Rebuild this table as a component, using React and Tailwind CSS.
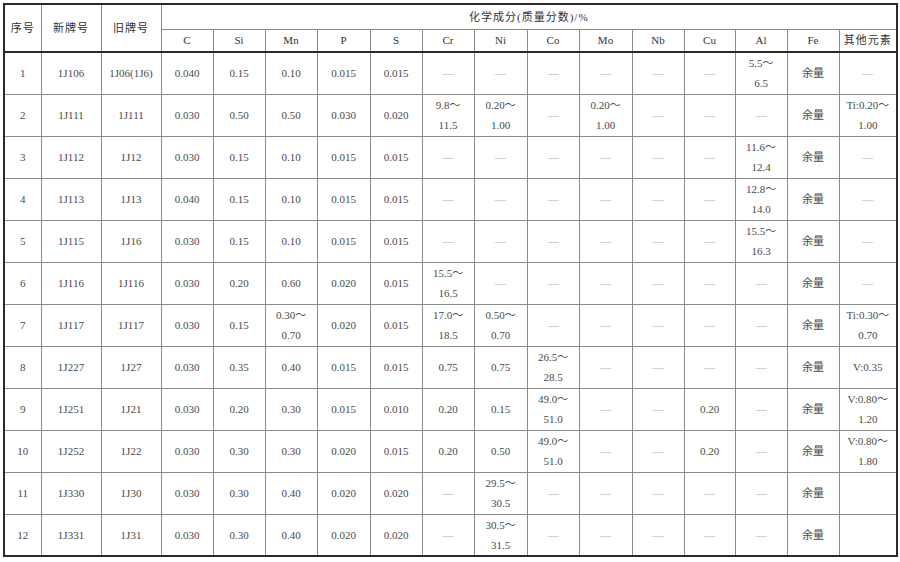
import React from "react"

const elems = ["C", "Si", "Mn", "P", "S", "Cr", "Ni", "Co", "Mo", "Nb", "Cu", "Al", "Fe", "其他元素"]
const widths = [37, 60, 60, 52, 52, 52, 53, 52, 52, 53, 52, 53, 52, 51, 52, 52, 58]

const D = "—"
const rows = [
  ["1", "1J106", "1J06(1J6)", "0.040", "0.15", "0.10", "0.015", "0.015", D, D, D, D, D, D, "5.5～|6.5", "余量", D],
  ["2", "1J111", "1J111", "0.030", "0.50", "0.50", "0.030", "0.020", "9.8～|11.5", "0.20～|1.00", D, "0.20～|1.00", D, D, D, "余量", "Ti:0.20～|1.00"],
  ["3", "1J112", "1J12", "0.030", "0.15", "0.10", "0.015", "0.015", D, D, D, D, D, D, "11.6～|12.4", "余量", D],
  ["4", "1J113", "1J13", "0.040", "0.15", "0.10", "0.015", "0.015", D, D, D, D, D, D, "12.8～|14.0", "余量", D],
  ["5", "1J115", "1J16", "0.030", "0.15", "0.10", "0.015", "0.015", D, D, D, D, D, D, "15.5～|16.3", "余量", D],
  ["6", "1J116", "1J116", "0.030", "0.20", "0.60", "0.020", "0.015", "15.5～|16.5", D, D, D, D, D, D, "余量", D],
  ["7", "1J117", "1J117", "0.030", "0.15", "0.30～|0.70", "0.020", "0.015", "17.0～|18.5", "0.50～|0.70", D, D, D, D, D, "余量", "Ti:0.30～|0.70"],
  ["8", "1J227", "1J27", "0.030", "0.35", "0.40", "0.015", "0.015", "0.75", "0.75", "26.5～|28.5", D, D, D, D, "余量", "V:0.35"],
  ["9", "1J251", "1J21", "0.030", "0.20", "0.30", "0.015", "0.010", "0.20", "0.15", "49.0～|51.0", D, D, "0.20", D, "余量", "V:0.80～|1.20"],
  ["10", "1J252", "1J22", "0.030", "0.30", "0.30", "0.020", "0.015", "0.20", "0.50", "49.0～|51.0", D, D, "0.20", D, "余量", "V:0.80～|1.80"],
  ["11", "1J330", "1J30", "0.030", "0.30", "0.40", "0.020", "0.020", D, "29.5～|30.5", D, D, D, D, D, "余量", ""],
  ["12", "1J331", "1J31", "0.030", "0.30", "0.40", "0.020", "0.020", D, "30.5～|31.5", D, D, D, D, D, "余量", ""],
]

function Cell({ value, last }) {
  const lines = value.split("|")
  const dash = value === D
  return (
    <td
      className={
        "border border-[#8a8a8a] text-center align-middle p-0 " +
        (last ? "border-r-2 border-r-[#2a2a2a] " : "") +
        (dash ? "text-[#b0b0b0]" : "text-[#4a4a4a]")
      }
    >
      {lines.map((l, i) => (
        <div key={i} className="leading-[20px]">
          {l}
        </div>
      ))}
    </td>
  )
}

export default function App() {
  return (
    <div className="w-[900px] h-[562px] bg-white pt-[3px] pl-[3px] overflow-hidden">
      <table
        className="table-fixed border-collapse text-[11px] border-2 border-[#2a2a2a]"
        style={{ width: 894, fontFamily: '"Liberation Serif", "Noto Sans CJK SC", serif' }}
      >
        <colgroup>
          {widths.map((w, i) => (
            <col key={i} style={{ width: w }} />
          ))}
        </colgroup>
        <thead>
          <tr className="h-[25px] text-[#333]">
            <th rowSpan={2} className="border border-[#8a8a8a] border-b-2 border-b-[#2a2a2a] font-normal p-0 tracking-[1px]">序号</th>
            <th rowSpan={2} className="border border-[#8a8a8a] border-b-2 border-b-[#2a2a2a] font-normal p-0 tracking-[1px]">新牌号</th>
            <th rowSpan={2} className="border border-[#8a8a8a] border-b-2 border-b-[#2a2a2a] font-normal p-0 tracking-[1px]">旧牌号</th>
            <th colSpan={14} className="border border-[#8a8a8a] border-r-2 border-r-[#2a2a2a] font-normal p-0 tracking-[1px]">
              化学成分(质量分数)/%
            </th>
          </tr>
          <tr className="h-[23px] text-[#333]">
            {elems.map((e, i) => (
              <th
                key={e}
                className={
                  "border border-[#8a8a8a] border-b-2 border-b-[#2a2a2a] font-normal p-0 " +
                  (i === elems.length - 1 ? "border-r-2 border-r-[#2a2a2a] tracking-[1px]" : "")
                }
              >
                {e}
              </th>
            ))}
          </tr>
        </thead>
        <tbody>
          {rows.map((r) => (
            <tr key={r[0]} className="h-[42px]">
              {r.map((v, i) => (
                <Cell key={i} value={v} last={i === r.length - 1} />
              ))}
            </tr>
          ))}
        </tbody>
      </table>
    </div>
  )
}
